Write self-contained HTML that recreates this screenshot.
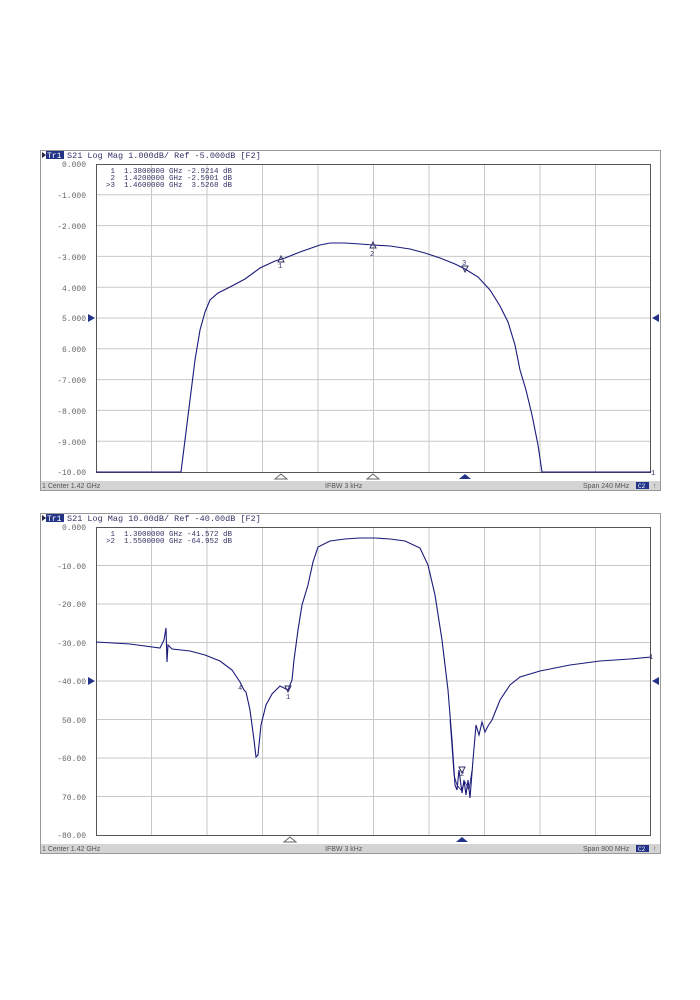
<!DOCTYPE html>
<html><head><meta charset="utf-8"><style>
html,body{margin:0;padding:0;background:#fff;width:700px;height:1000px;overflow:hidden}
text{font-family:"Liberation Mono",monospace}
</style></head><body>
<svg width="700" height="1000" viewBox="0 0 700 1000" xmlns="http://www.w3.org/2000/svg">
<defs>
<g id="vlines" stroke="#c8c8c8" stroke-width="1">
<line x1="151.5" y1="0" x2="151.5" y2="308"/><line x1="207" y1="0" x2="207" y2="308"/><line x1="262.5" y1="0" x2="262.5" y2="308"/><line x1="318" y1="0" x2="318" y2="308"/><line x1="373.5" y1="0" x2="373.5" y2="308"/><line x1="429" y1="0" x2="429" y2="308"/><line x1="484.5" y1="0" x2="484.5" y2="308"/><line x1="540" y1="0" x2="540" y2="308"/><line x1="595.5" y1="0" x2="595.5" y2="308"/>
</g>
</defs>

<!-- Chart 1 -->
<rect x="40.5" y="150.5" width="620" height="340" fill="#fff" stroke="#999"/>
<path d="M42 152 l4 3 l-4 3z" fill="#224"/>
<rect x="46" y="151" width="18" height="8" fill="#223388"/>
<text x="47" y="158" font-size="8" fill="#fff">Tr1</text>
<text x="67" y="158" font-size="8.5" fill="#333366">S21 Log Mag 1.000dB/ Ref -5.000dB [F2]</text>
<g transform="translate(0,164)"><use href="#vlines"/>
<g stroke="#c8c8c8"><line x1="96" y1="30.8" x2="651" y2="30.8"/><line x1="96" y1="61.6" x2="651" y2="61.6"/><line x1="96" y1="92.4" x2="651" y2="92.4"/><line x1="96" y1="123.2" x2="651" y2="123.2"/><line x1="96" y1="154" x2="651" y2="154"/><line x1="96" y1="184.8" x2="651" y2="184.8"/><line x1="96" y1="215.6" x2="651" y2="215.6"/><line x1="96" y1="246.4" x2="651" y2="246.4"/><line x1="96" y1="277.2" x2="651" y2="277.2"/></g></g>
<rect x="96.5" y="164.5" width="554" height="308" fill="none" stroke="#555"/>
<g font-size="8" fill="#666" text-anchor="end">
<text x="86" y="167">0.000</text><text x="86" y="198">-1.000</text><text x="86" y="229">-2.000</text><text x="86" y="260">-3.000</text><text x="86" y="291">4.000</text><text x="86" y="321">5.000</text><text x="86" y="352">6.000</text><text x="86" y="383">-7.000</text><text x="86" y="414">-8.000</text><text x="86" y="445">-9.000</text><text x="86" y="475">-10.00</text>
</g>
<g font-size="7.5" fill="#333366">
<text x="106" y="173" xml:space="preserve"> 1  1.3800000 GHz -2.9214 dB</text>
<text x="106" y="180" xml:space="preserve"> 2  1.4200000 GHz -2.5901 dB</text>
<text x="106" y="187" xml:space="preserve">&gt;3  1.4600000 GHz  3.5268 dB</text>
</g>
<path d="M88 314 l7 4 l-7 4z M659 314 l-7 4 l7 4z" fill="#223388"/>
<polyline fill="none" stroke="#1a1a7a" stroke-width="1.1" points="96,472 181,472 185,440 190,400 195,360 200,330 205,312 210,300 218,293 230,287 245,279 260,268 275,261 285,258 300,252 320,245 330,243 345,243 360,244 373,245 390,246 410,249 425,253 440,258 455,264 465,269 478,277 490,290 500,306 508,322 515,345 520,370 526,390 532,415 538,445 542,472 651,472"/>
<path d="M278 262 l3 -6 l3 6z M370 248 l3 -6 l3 6z M462 266 l3 6 l3 -6z" fill="none" stroke="#333366"/>
<text x="278" y="268" font-size="7" fill="#333366">1</text><text x="370" y="256" font-size="7" fill="#333366">2</text><text x="462" y="265" font-size="7" fill="#333366">3</text>
<path d="M275 479 l6 -5 l6 5z M367 479 l6 -5 l6 5z" fill="none" stroke="#666"/>
<path d="M459 479 l6 -5 l6 5z" fill="#223388"/>
<text x="651" y="475" font-size="7" fill="#333366">1</text>
<rect x="41" y="481" width="619" height="9" fill="#d4d4d4"/>
<g font-size="7" fill="#555">
<text x="42" y="488" style="font-family:'Liberation Sans'">1  Center 1.42 GHz</text>
<text x="325" y="488" style="font-family:'Liberation Sans'">IFBW 3 kHz</text>
<text x="583" y="488" style="font-family:'Liberation Sans'">Span 240 MHz</text>
</g>
<rect x="636" y="482" width="13" height="7" fill="#223388"/><text x="638" y="488" font-size="6" fill="#fff">C2</text>
<text x="653" y="488" font-size="6" fill="#555">!</text>

<!-- Chart 2 -->
<rect x="40.5" y="513.5" width="620" height="340" fill="#fff" stroke="#999"/>
<path d="M42 515 l4 3 l-4 3z" fill="#224"/>
<rect x="46" y="514" width="18" height="8" fill="#223388"/>
<text x="47" y="521" font-size="8" fill="#fff">Tr1</text>
<text x="67" y="521" font-size="8.5" fill="#333366">S21 Log Mag 10.00dB/ Ref -40.00dB [F2]</text>
<g transform="translate(0,527)"><use href="#vlines"/>
<g stroke="#c8c8c8"><line x1="96" y1="38.5" x2="651" y2="38.5"/><line x1="96" y1="77" x2="651" y2="77"/><line x1="96" y1="115.5" x2="651" y2="115.5"/><line x1="96" y1="154" x2="651" y2="154"/><line x1="96" y1="192.5" x2="651" y2="192.5"/><line x1="96" y1="231" x2="651" y2="231"/><line x1="96" y1="269.5" x2="651" y2="269.5"/></g></g>
<rect x="96.5" y="527.5" width="554" height="308" fill="none" stroke="#555"/>
<g font-size="8" fill="#666" text-anchor="end">
<text x="86" y="530">0.000</text><text x="86" y="569">-10.00</text><text x="86" y="607">-20.00</text><text x="86" y="646">-30.00</text><text x="86" y="684">-40.00</text>
<text x="86" y="723">50.00</text><text x="86" y="761">-60.00</text><text x="86" y="800">70.00</text><text x="86" y="838">-80.00</text>
</g>
<g font-size="7.5" fill="#333366">
<text x="106" y="536" xml:space="preserve"> 1  1.3000000 GHz -41.572 dB</text>
<text x="106" y="543" xml:space="preserve">&gt;2  1.5500000 GHz -64.952 dB</text>
</g>
<path d="M88 677 l7 4 l-7 4z M659 677 l-7 4 l7 4z" fill="#223388"/>
<polyline fill="none" stroke="#1a1a7a" stroke-width="1.1" points="96,642 130,644 160,648 164,640 166,628 167,662 168,645 172,649 190,651 205,655 220,661 232,670 240,682 244,690 246,692 250,710 254,740 256,757 258,755 261,725 266,705 272,694 280,686 288,690 292,680 294,660 298,630 302,605 308,585 313,562 318,547 330,541 345,539 360,538 375,538 390,539 405,541 420,548 428,565 435,595 442,640 448,690 452,740 455,785 457,790 459,770 462,793 464,780 466,795 468,780 470,798 473,760 476,725 479,735 482,722 485,732 488,726 492,720 500,700 510,685 520,677 540,671 570,665 600,661 630,659 651,657"/>
<polyline fill="none" stroke="#1a1a7a" stroke-width="0.8" points="450,720 454,775 457,785 461,790 465,782 469,790 472,770"/>
<path d="M285 686 l3 6 l3 -6z M459 767 l3 6 l3 -6z" fill="none" stroke="#333366"/>
<text x="286" y="699" font-size="7" fill="#333366">1</text><text x="460" y="776" font-size="7" fill="#333366">2</text>
<text x="238" y="690" font-size="7" fill="#333366">4</text>
<text x="649" y="659" font-size="7" fill="#333366">1</text>
<path d="M284 842 l6 -5 l6 5z" fill="none" stroke="#666"/>
<path d="M456 842 l6 -5 l6 5z" fill="#223388"/>
<rect x="41" y="844" width="619" height="9" fill="#d4d4d4"/>
<g font-size="7" fill="#555">
<text x="42" y="851" style="font-family:'Liberation Sans'">1  Center 1.42 GHz</text>
<text x="325" y="851" style="font-family:'Liberation Sans'">IFBW 3 kHz</text>
<text x="583" y="851" style="font-family:'Liberation Sans'">Span 800 MHz</text>
</g>
<rect x="636" y="845" width="13" height="7" fill="#223388"/><text x="638" y="851" font-size="6" fill="#fff">C2</text>
<text x="653" y="851" font-size="6" fill="#555">!</text>
</svg>
</body></html>
